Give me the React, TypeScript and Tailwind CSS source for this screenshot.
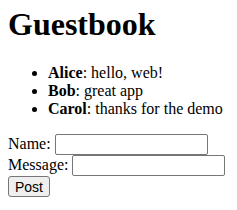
import React from 'react';

const entries = [
  { name: 'Alice', text: 'hello, web!' },
  { name: 'Bob', text: 'great app' },
  { name: 'Carol', text: 'thanks for the demo' },
];

const inputCls =
  "w-[153px] h-[21px] border border-[#767676] rounded-[2px] px-[2px] py-[1px] bg-white text-[13.33px] font-['Liberation_Sans',Arial,sans-serif] align-baseline";

export default function App() {
  return (
    <div className="px-2 pt-[6px] font-['Liberation_Serif','Times_New_Roman',serif] text-[16px] leading-[normal] text-black bg-white min-h-[210px]">
      <h1 className="text-[32px] font-bold leading-[normal] mb-[21.44px]">Guestbook</h1>

      <ul className="list-disc pl-10 mb-4">
        {entries.map((e) => (
          <li key={e.name}>
            <b className="font-bold">{e.name}</b>: {e.text}
          </li>
        ))}
      </ul>

      <form onSubmit={(ev) => ev.preventDefault()}>
        Name: <input className={inputCls} type="text" />
        <br />
        Message: <input className={inputCls} type="text" />
        <br />
        <button
          type="submit"
          className="h-[21px] bg-[#efefef] border border-[#767676] rounded-[3px] px-[6px] text-[14px] leading-[normal] font-['Liberation_Sans',Arial,sans-serif] text-black"
        >
          Post
        </button>
      </form>
    </div>
  );
}
